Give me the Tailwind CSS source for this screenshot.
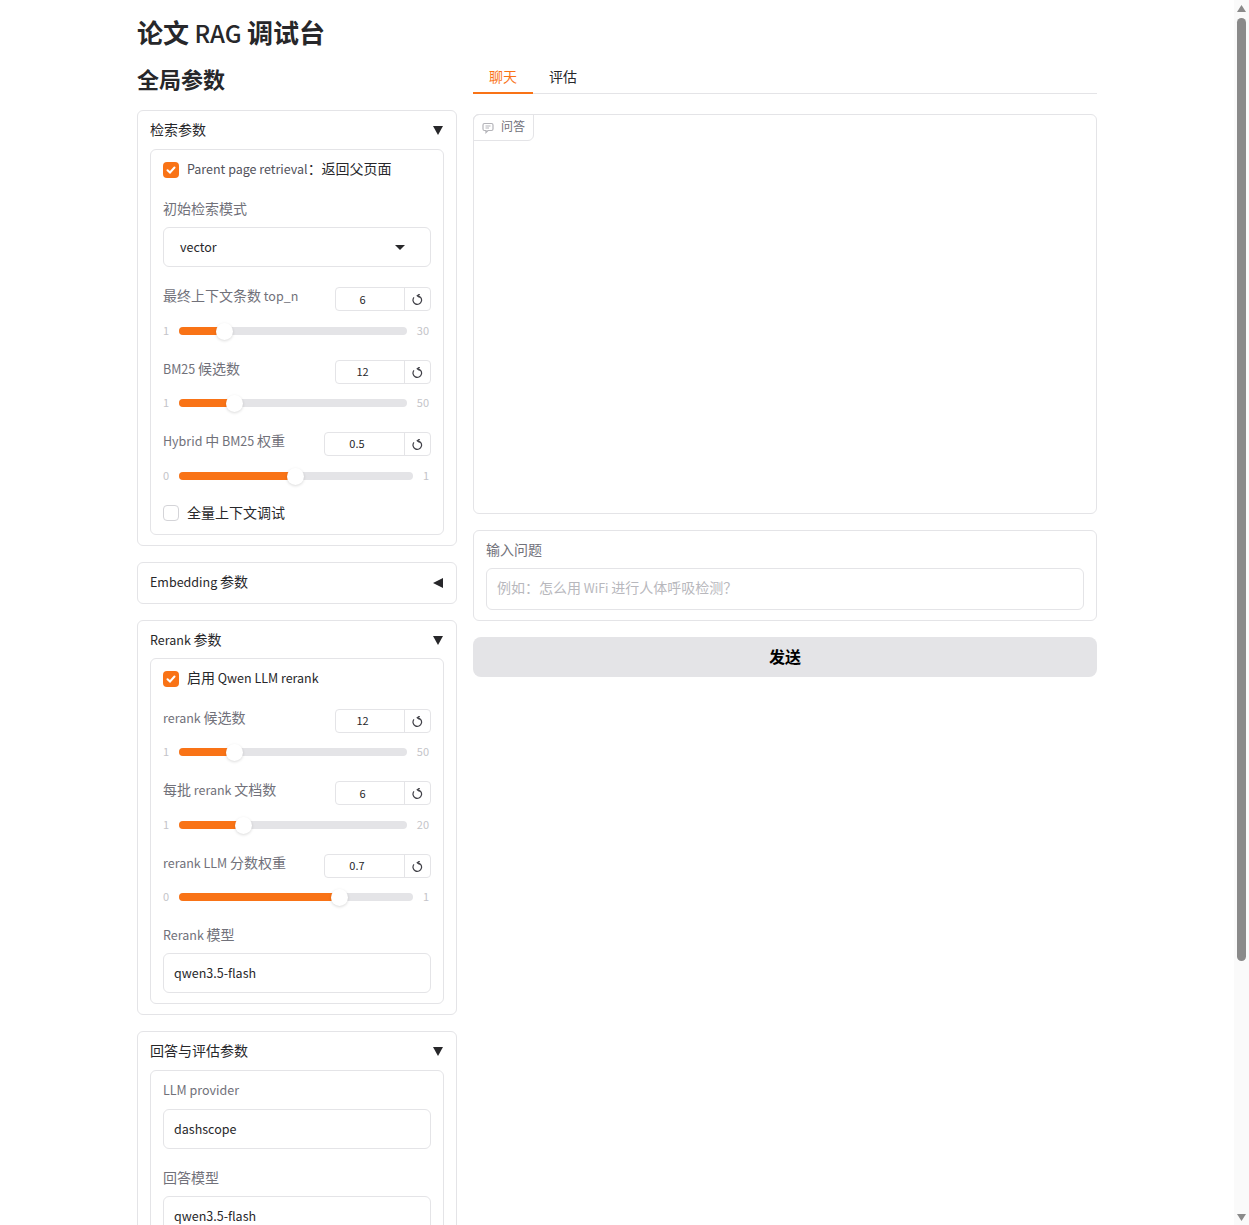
<!DOCTYPE html>
<html lang="zh">
<head>
    <meta charset="UTF-8">
    <title>论文 RAG 调试台</title>
    <script src="https://cdn.jsdelivr.net/npm/@tailwindcss/browser@4"></script>
</head>
<body class="bg-white">
<div class="flex h-[1225px] overflow-hidden text-[14px] leading-[20px] text-[#27272a] font-['Noto_Sans_CJK_SC','Noto_Sans',sans-serif]">

    <!-- page -->
    <div class="w-[1234px] shrink-0 pl-[137px]">
        <div class="w-[960px]">
            <h1 class="h-[66px] pt-[13px] text-[26px] leading-[38px] font-bold">论文<span class="text-[24px] font-medium"> RAG </span>调试台</h1>

            <div class="flex gap-[16px] items-start">

                <!-- left column -->
                <div class="w-[320px] shrink-0">
                    <h2 class="h-[46px] -mt-[3px] text-[22px] leading-[30px] font-bold">全局参数</h2>
                    <div class="h-px"></div>

                    <!-- 检索参数 -->
                    <div class="h-[436px] border border-[#e4e4e7] rounded-md px-[12px]">
                        <div class="flex justify-between items-center h-[38px]">
                            <span class="-mt-[2px]">检索参数</span>
                            <svg class="w-[10px] h-[10px] mr-[1px]" viewBox="0 0 10 10"><polygon points="0,1 10,1 5,10" fill="#27272a"/></svg>
                        </div>
                        <div class="h-[386px] border border-[#e4e4e7] rounded-md px-[12px] pt-[12px]">
                            <div class="flex items-center gap-[8px] h-[16px]">
                                <div class="w-[16px] h-[16px] rounded-[4px] bg-[#f97316] flex items-center justify-center">
                                    <svg class="w-[10px] h-[10px]" viewBox="0 0 10 10"><path d="M1.5 5.2 L4 7.5 L8.5 2.5" fill="none" stroke="white" stroke-width="2" stroke-linecap="round"/></svg>
                                </div>
                                <span class="-mt-[3px]"><span class="text-[12.5px] text-[#52525b]">Parent page retrieval</span>：返回父页面</span>
                            </div>
                            <div class="mt-[20px] text-[#71717a]">初始检索模式</div>
                            <div class="mt-[9px] h-[40px] border border-[#e4e4e7] rounded-md flex items-center justify-between pl-[16px] pr-[25px]">
                                <span class="text-[12.5px]">vector</span>
                                <svg class="w-[10px] h-[5px]" viewBox="0 0 10 5"><polygon points="0,0 10,0 5,5" fill="#27272a"/></svg>
                            </div>

                            <div class="mt-[20px] flex justify-between h-[24px]">
                                <span class="-mt-[2px] text-[#71717a]">最终上下文条数<span class="text-[12.5px]"> top_n</span></span>
                                <div class="w-[96px] flex border border-[#e4e4e7] rounded-[4px] text-[11px]">
                                    <div class="flex-1 text-center pr-[15px] pt-[1px]">6</div>
                                    <div class="w-[26px] border-l border-[#e4e4e7] flex items-center justify-center">
                                        <svg class="w-[11px] h-[11px]" viewBox="0 0 10 10" fill="none" stroke="#3f3f46" stroke-width="1.1"><path d="M1.8 3 A3.9 3.9 0 1 0 5 1.6"/><path d="M7 0 L4.8 1.6 L7 3.2"/></svg>
                                    </div>
                                </div>
                            </div>
                            <div class="mt-[10px] flex items-center h-[20px] text-[11px] text-[#c4c4c9]">
                                <span class="w-[16px] -mt-[2px]">1</span>
                                <div class="relative flex-1 h-[8px] rounded-full bg-[#e4e4e7]">
                                    <div class="h-full rounded-full bg-[#f97316]" style="width:45px"></div>
                                    <div class="absolute -top-[4px] left-[37px] w-[17px] h-[17px] rounded-full bg-white shadow-[0_1px_3px_rgba(0,0,0,0.15)]"></div>
                                </div>
                                <span class="w-[24px] -mt-[2px] text-right pr-[2px]">30</span>
                            </div>

                            <div class="mt-[19px] flex justify-between h-[24px]">
                                <span class="-mt-[2px] text-[#71717a]"><span class="text-[12.5px]">BM25 </span>候选数</span>
                                <div class="w-[96px] flex border border-[#e4e4e7] rounded-[4px] text-[11px]">
                                    <div class="flex-1 text-center pr-[15px]">12</div>
                                    <div class="w-[26px] border-l border-[#e4e4e7] flex items-center justify-center">
                                        <svg class="w-[11px] h-[11px]" viewBox="0 0 10 10" fill="none" stroke="#3f3f46" stroke-width="1.1"><path d="M1.8 3 A3.9 3.9 0 1 0 5 1.6"/><path d="M7 0 L4.8 1.6 L7 3.2"/></svg>
                                    </div>
                                </div>
                            </div>
                            <div class="mt-[9px] flex items-center h-[20px] text-[11px] text-[#c4c4c9]">
                                <span class="w-[16px] -mt-[2px]">1</span>
                                <div class="relative flex-1 h-[8px] rounded-full bg-[#e4e4e7]">
                                    <div class="h-full rounded-full bg-[#f97316]" style="width:56px"></div>
                                    <div class="absolute -top-[4px] left-[47px] w-[17px] h-[17px] rounded-full bg-white shadow-[0_1px_3px_rgba(0,0,0,0.15)]"></div>
                                </div>
                                <span class="w-[24px] -mt-[2px] text-right pr-[2px]">50</span>
                            </div>

                            <div class="mt-[19px] flex justify-between h-[24px]">
                                <span class="-mt-[2px] text-[#71717a]"><span class="text-[12.5px]">Hybrid </span>中<span class="text-[12.5px]"> BM25 </span>权重</span>
                                <div class="w-[107px] flex border border-[#e4e4e7] rounded-[4px] text-[11px]">
                                    <div class="flex-1 text-center pr-[15px]">0.5</div>
                                    <div class="w-[26px] border-l border-[#e4e4e7] flex items-center justify-center">
                                        <svg class="w-[11px] h-[11px]" viewBox="0 0 10 10" fill="none" stroke="#3f3f46" stroke-width="1.1"><path d="M1.8 3 A3.9 3.9 0 1 0 5 1.6"/><path d="M7 0 L4.8 1.6 L7 3.2"/></svg>
                                    </div>
                                </div>
                            </div>
                            <div class="mt-[10px] flex items-center h-[20px] text-[11px] text-[#c4c4c9]">
                                <span class="w-[16px] -mt-[2px]">0</span>
                                <div class="relative flex-1 h-[8px] rounded-full bg-[#e4e4e7]">
                                    <div class="h-full rounded-full bg-[#f97316]" style="width:117px"></div>
                                    <div class="absolute -top-[4px] left-[108px] w-[17px] h-[17px] rounded-full bg-white shadow-[0_1px_3px_rgba(0,0,0,0.15)]"></div>
                                </div>
                                <span class="w-[18px] -mt-[2px] text-right pr-[2px]">1</span>
                            </div>

                            <div class="mt-[19px] flex items-center gap-[8px] h-[16px]">
                                <div class="w-[16px] h-[16px] rounded-[4px] border border-[#d4d4d8] bg-white"></div>
                                <span class="-mt-[2px]">全量上下文调试</span>
                            </div>
                        </div>
                    </div>

                    <!-- Embedding 参数 -->
                    <div class="mt-[16px] h-[42px] border border-[#e4e4e7] rounded-md px-[12px] flex justify-between items-center">
                        <span class="-mt-[4px]"><span class="text-[12.5px]">Embedding </span>参数</span>
                        <svg class="w-[10px] h-[10px] mr-[1px]" viewBox="0 0 10 10"><polygon points="10,0 10,10 0,5" fill="#27272a"/></svg>
                    </div>

                    <!-- Rerank 参数 -->
                    <div class="mt-[16px] h-[395px] border border-[#e4e4e7] rounded-md px-[12px]">
                        <div class="flex justify-between items-center h-[37px]">
                            <span><span class="text-[12.5px]">Rerank </span>参数</span>
                            <svg class="w-[10px] h-[10px] mr-[1px]" viewBox="0 0 10 10"><polygon points="0,1 10,1 5,10" fill="#27272a"/></svg>
                        </div>
                        <div class="h-[346px] border border-[#e4e4e7] rounded-md px-[12px] pt-[12px]">
                            <div class="flex items-center gap-[8px] h-[16px]">
                                <div class="w-[16px] h-[16px] rounded-[4px] bg-[#f97316] flex items-center justify-center">
                                    <svg class="w-[10px] h-[10px]" viewBox="0 0 10 10"><path d="M1.5 5.2 L4 7.5 L8.5 2.5" fill="none" stroke="white" stroke-width="2" stroke-linecap="round"/></svg>
                                </div>
                                <span class="-mt-[3px]">启用<span class="text-[12.5px]"> Qwen LLM rerank</span></span>
                            </div>

                            <div class="mt-[22px] flex justify-between h-[24px]">
                                <span class="-mt-[2px] text-[#71717a]"><span class="text-[12.5px]">rerank </span>候选数</span>
                                <div class="w-[96px] flex border border-[#e4e4e7] rounded-[4px] text-[11px]">
                                    <div class="flex-1 text-center pr-[15px]">12</div>
                                    <div class="w-[26px] border-l border-[#e4e4e7] flex items-center justify-center">
                                        <svg class="w-[11px] h-[11px]" viewBox="0 0 10 10" fill="none" stroke="#3f3f46" stroke-width="1.1"><path d="M1.8 3 A3.9 3.9 0 1 0 5 1.6"/><path d="M7 0 L4.8 1.6 L7 3.2"/></svg>
                                    </div>
                                </div>
                            </div>
                            <div class="mt-[9px] flex items-center h-[20px] text-[11px] text-[#c4c4c9]">
                                <span class="w-[16px] -mt-[2px]">1</span>
                                <div class="relative flex-1 h-[8px] rounded-full bg-[#e4e4e7]">
                                    <div class="h-full rounded-full bg-[#f97316]" style="width:56px"></div>
                                    <div class="absolute -top-[4px] left-[47px] w-[17px] h-[17px] rounded-full bg-white shadow-[0_1px_3px_rgba(0,0,0,0.15)]"></div>
                                </div>
                                <span class="w-[24px] -mt-[2px] text-right pr-[2px]">50</span>
                            </div>

                            <div class="mt-[19px] flex justify-between h-[24px]">
                                <span class="-mt-[2px] text-[#71717a]">每批<span class="text-[12.5px]"> rerank </span>文档数</span>
                                <div class="w-[96px] flex border border-[#e4e4e7] rounded-[4px] text-[11px]">
                                    <div class="flex-1 text-center pr-[15px] pt-[1px]">6</div>
                                    <div class="w-[26px] border-l border-[#e4e4e7] flex items-center justify-center">
                                        <svg class="w-[11px] h-[11px]" viewBox="0 0 10 10" fill="none" stroke="#3f3f46" stroke-width="1.1"><path d="M1.8 3 A3.9 3.9 0 1 0 5 1.6"/><path d="M7 0 L4.8 1.6 L7 3.2"/></svg>
                                    </div>
                                </div>
                            </div>
                            <div class="mt-[10px] flex items-center h-[20px] text-[11px] text-[#c4c4c9]">
                                <span class="w-[16px] -mt-[2px]">1</span>
                                <div class="relative flex-1 h-[8px] rounded-full bg-[#e4e4e7]">
                                    <div class="h-full rounded-full bg-[#f97316]" style="width:64px"></div>
                                    <div class="absolute -top-[4px] left-[56px] w-[17px] h-[17px] rounded-full bg-white shadow-[0_1px_3px_rgba(0,0,0,0.15)]"></div>
                                </div>
                                <span class="w-[24px] -mt-[2px] text-right pr-[2px]">20</span>
                            </div>

                            <div class="mt-[19px] flex justify-between h-[24px]">
                                <span class="-mt-[2px] text-[#71717a]"><span class="text-[12.5px]">rerank LLM </span>分数权重</span>
                                <div class="w-[107px] flex border border-[#e4e4e7] rounded-[4px] text-[11px]">
                                    <div class="flex-1 text-center pr-[15px]">0.7</div>
                                    <div class="w-[26px] border-l border-[#e4e4e7] flex items-center justify-center">
                                        <svg class="w-[11px] h-[11px]" viewBox="0 0 10 10" fill="none" stroke="#3f3f46" stroke-width="1.1"><path d="M1.8 3 A3.9 3.9 0 1 0 5 1.6"/><path d="M7 0 L4.8 1.6 L7 3.2"/></svg>
                                    </div>
                                </div>
                            </div>
                            <div class="mt-[9px] flex items-center h-[20px] text-[11px] text-[#c4c4c9]">
                                <span class="w-[16px] -mt-[2px]">0</span>
                                <div class="relative flex-1 h-[8px] rounded-full bg-[#e4e4e7]">
                                    <div class="h-full rounded-full bg-[#f97316]" style="width:161px"></div>
                                    <div class="absolute -top-[4px] left-[152px] w-[17px] h-[17px] rounded-full bg-white shadow-[0_1px_3px_rgba(0,0,0,0.15)]"></div>
                                </div>
                                <span class="w-[18px] -mt-[2px] text-right pr-[2px]">1</span>
                            </div>

                            <div class="mt-[17px] text-[#71717a]"><span class="text-[12.5px]">Rerank </span>模型</div>
                            <div class="mt-[8px] h-[40px] border border-[#e4e4e7] rounded-md flex items-center pl-[10px] text-[12.5px]">qwen3.5-flash</div>
                        </div>
                    </div>

                    <!-- 回答与评估参数 -->
                    <div class="mt-[16px] h-[300px] border border-[#e4e4e7] rounded-md px-[12px]">
                        <div class="flex justify-between items-center h-[38px]">
                            <span class="-mt-[2px]">回答与评估参数</span>
                            <svg class="w-[10px] h-[10px] mr-[1px]" viewBox="0 0 10 10"><polygon points="0,1 10,1 5,10" fill="#27272a"/></svg>
                        </div>
                        <div class="h-[240px] border border-[#e4e4e7] rounded-md px-[12px] pt-[9px]">
                            <div class="text-[#71717a] text-[12.5px]">LLM provider</div>
                            <div class="mt-[9px] h-[40px] border border-[#e4e4e7] rounded-md flex items-center pl-[10px] text-[12.5px]">dashscope</div>
                            <div class="mt-[18px] text-[#71717a]">回答模型</div>
                            <div class="mt-[9px] h-[40px] border border-[#e4e4e7] rounded-md flex items-center pl-[10px] text-[12.5px]">qwen3.5-flash</div>
                        </div>
                    </div>
                </div>

                <!-- right column -->
                <div class="w-[624px] shrink-0">
                    <div class="flex h-[28px] border-b border-[#e4e4e7]">
                        <div class="w-[60px] h-[28px] text-center text-[#f97316] border-b-2 border-[#f97316]">聊天</div>
                        <div class="w-[60px] text-center">评估</div>
                    </div>

                    <div class="mt-[20px] h-[400px] border border-[#e4e4e7] rounded-md">
                        <div class="w-[61px] h-[27px] -mt-px -ml-px border border-[#e4e4e7] rounded-br-md rounded-tl-md flex items-center pl-[8px] gap-[7px] text-[12px] text-[#71717a]">
                            <svg class="w-[12px] h-[12px]" viewBox="0 0 12 12" fill="none" stroke="#b4b4b9" stroke-width="1.2"><path d="M1 3 Q1 1.5 2.5 1.5 H9.5 Q11 1.5 11 3 V7 Q11 8.5 9.5 8.5 H6 L4 10.5 V8.5 H2.5 Q1 8.5 1 7 Z"/><path d="M3.5 4 H8.5 M3.5 6 H7"/></svg>
                            <span class="-mt-[4px]">问答</span>
                        </div>
                    </div>

                    <div class="mt-[16px] h-[91px] border border-[#e4e4e7] rounded-md px-[12px] pt-[8px]">
                        <div class="text-[#71717a]">输入问题</div>
                        <div class="mt-[9px] w-full h-[42px] border border-[#e4e4e7] rounded-md px-[10px] flex items-center text-[#b8b8bd]"><span class="-mt-[4px]">例如：怎么用<span class="text-[12.5px]"> WiFi </span>进行人体呼吸检测？</span></div>
                    </div>

                    <div class="mt-[16px] h-[40px] rounded-lg bg-[#e4e4e7] flex items-center justify-center text-[16px] font-bold text-black"><span class="-mt-[2px]">发送</span></div>
                </div>
            </div>
        </div>
    </div>

    <!-- scrollbar -->
    <div class="w-[15px] h-full shrink-0 bg-[#fafafa] flex flex-col items-center justify-between pt-[5px] pb-[4px]">
        <svg class="w-[9px] h-[7px]" viewBox="0 0 9 7"><polygon points="0,7 9,7 4.5,0" fill="#8a8a8a"/></svg>
        <div class="w-[9px] h-[943px] mt-[6px] mb-[253px] rounded-full bg-[#8a8a8a]"></div>
        <svg class="w-[9px] h-[7px]" viewBox="0 0 9 7"><polygon points="0,0 9,0 4.5,7" fill="#8a8a8a"/></svg>
    </div>
</div>
</body>
</html>
